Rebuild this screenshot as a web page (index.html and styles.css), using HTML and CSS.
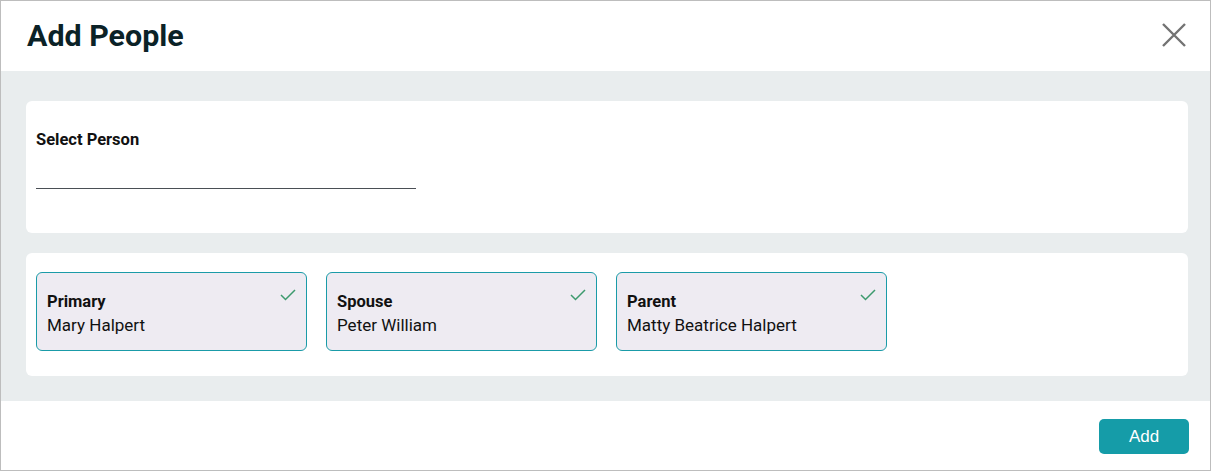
FILE: index.html
```html
<!DOCTYPE html>
<html>
<head>
<meta charset="utf-8">
<link rel="stylesheet" href="styles.css">
</head>
<body>
<div class="dialog">
  <div class="header">
    <h1 class="title">Add People</h1>
    <button class="close" aria-label="Close">
      <svg width="24" height="24" viewBox="0 0 24 24"><path d="M1 1L23 23M23 1L1 23" stroke="#737373" stroke-width="2.4" fill="none"/></svg>
    </button>
  </div>
  <div class="body">
    <div class="card select-card">
      <div class="label">Select Person</div>
      <div class="input-line"></div>
    </div>
    <div class="card roles-card">
      <div class="role">
        <div class="role-text">
          <div class="role-name">Primary</div>
          <div class="person">Mary Halpert</div>
        </div>
        <svg class="check" width="16" height="12" viewBox="0 0 16 12"><path d="M1 6L5.5 10.5L15 1" stroke="#3d9a6e" stroke-width="1.5" fill="none"/></svg>
      </div>
      <div class="role">
        <div class="role-text">
          <div class="role-name">Spouse</div>
          <div class="person">Peter William</div>
        </div>
        <svg class="check" width="16" height="12" viewBox="0 0 16 12"><path d="M1 6L5.5 10.5L15 1" stroke="#3d9a6e" stroke-width="1.5" fill="none"/></svg>
      </div>
      <div class="role">
        <div class="role-text">
          <div class="role-name">Parent</div>
          <div class="person">Matty Beatrice Halpert</div>
        </div>
        <svg class="check" width="16" height="12" viewBox="0 0 16 12"><path d="M1 6L5.5 10.5L15 1" stroke="#3d9a6e" stroke-width="1.5" fill="none"/></svg>
      </div>
    </div>
  </div>
  <div class="footer">
    <button class="add">Add</button>
  </div>
</div>
</body>
</html>
```
FILE: styles.css
```css
* { box-sizing: border-box; }
html, body { margin: 0; padding: 0; }
body { font-family: Roboto, "Liberation Sans", sans-serif; background: #fff; }
.dialog {
  width: 1211px;
  height: 471px;
  border: 1px solid #bdbdbd;
  display: flex;
  flex-direction: column;
}
.header {
  height: 70px;
  display: flex;
  align-items: center;
  justify-content: space-between;
  padding: 0 24px 0 26px;
}
.title {
  margin: 0;
  font-size: 30.4px;
  font-weight: 700;
  color: #0b2227;
  line-height: 36px;
}
.close {
  border: none;
  background: none;
  padding: 0;
  width: 24px;
  height: 24px;
  margin-top: -2px;
  cursor: pointer;
}
.close svg { display: block; }
.body {
  height: 330px;
  background: #e9edee;
  padding: 30px 22px 25px 25px;
  display: flex;
  flex-direction: column;
  gap: 20px;
}
.card {
  background: #fff;
  border-radius: 6px;
}
.select-card {
  height: 132px;
  padding: 29px 10px 0 10px;
}
.label {
  font-size: 16.5px;
  font-weight: 700;
  color: #111;
  line-height: 19px;
}
.input-line {
  width: 380px;
  height: 1px;
  background: #4a4f55;
  margin-top: 39px;
}
.roles-card {
  height: 123px;
  padding: 19px 10px 0 10px;
  display: flex;
  gap: 19px;
  align-items: flex-start;
}
.role {
  width: 271px;
  height: 79px;
  border: 1px solid #1a9ba8;
  border-radius: 6px;
  background: #eeebf2;
  padding: 19px 10px 0 10px;
  display: flex;
  justify-content: space-between;
  align-items: flex-start;
}
.role-name {
  font-size: 16.5px;
  font-weight: 700;
  color: #111;
  line-height: 20px;
}
.person {
  font-size: 17px;
  color: #111;
  line-height: 20px;
  margin-top: 3px;
}
.check { margin-top: -3px; }
.footer {
  flex: 1;
  display: flex;
  justify-content: flex-end;
  align-items: flex-start;
  padding: 18px 21px 0 0;
}
.add {
  width: 90px;
  height: 35px;
  border: none;
  border-radius: 5px;
  background: #159ca8;
  color: #fff;
  font-family: "Liberation Sans", Arial, sans-serif;
  font-size: 17px;
  cursor: pointer;
}
```
